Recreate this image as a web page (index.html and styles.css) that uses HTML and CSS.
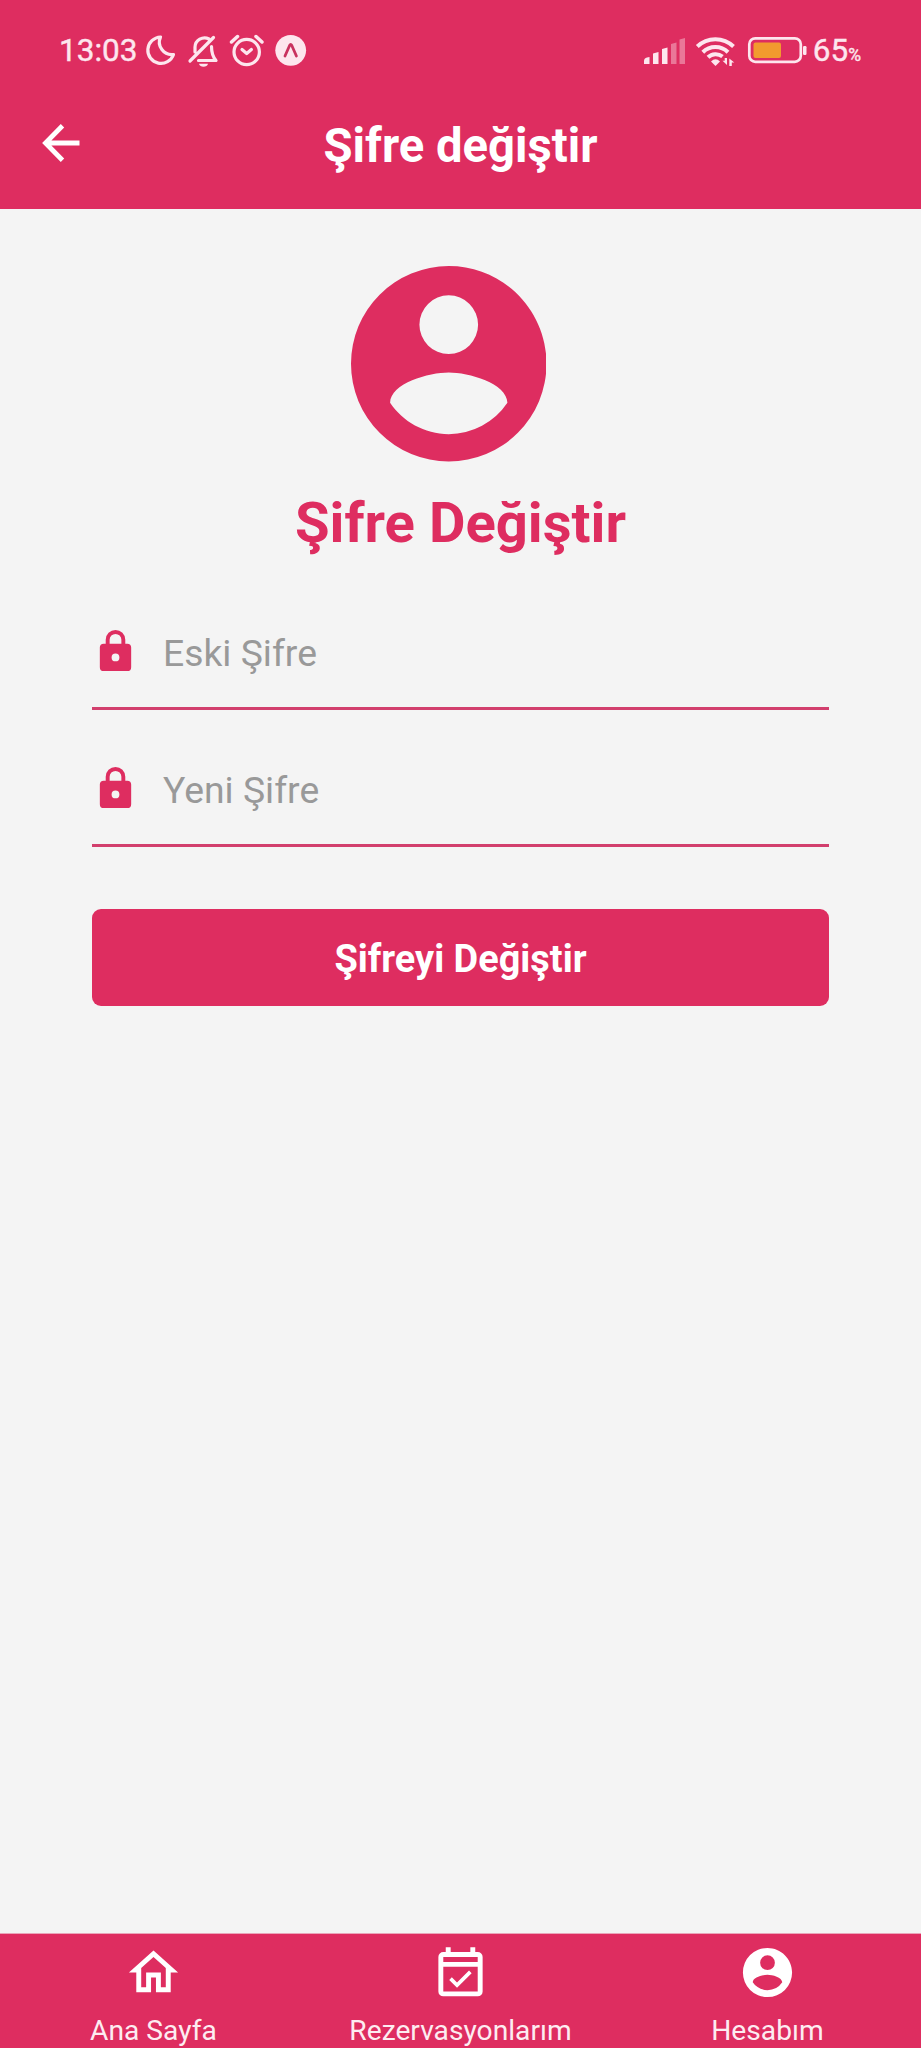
FILE: index.html
```html
<!DOCTYPE html>
<html lang="tr">
<head>
<meta charset="utf-8">
<title>Şifre değiştir</title>
<link rel="stylesheet" href="styles.css">
</head>
<body>
<div class="screen">
  <header class="top">
    <div class="status">
      <span class="clock">13:03</span>
      <svg class="sys" width="170" height="36" viewBox="143 32 170 36" fill="none" stroke="#fde6ee" stroke-width="3.200" stroke-linejoin="round" stroke-linecap="round">
        <path d="M160.500 37A13.200 13.200 0 1 0 173.500 54.500A12.500 12.500 0 0 1 160.500 37Z"/>
        <path d="M190 61L213.500 37.500M195 52V47a9.500 9.500 0 0 1 14-8M211.500 46.500c0 7 1 10 4.500 14H198.500"/>
        <path d="M199 63.700h9c-.5 4-8.500 4-9 0z" fill="#fde6ee" stroke="none"/>
        <circle cx="246.700" cy="52" r="12.700"/>
        <path d="M231.500 42l6-5.500M262 42l-6-5.500" stroke-width="3.500"/>
        <path d="M242 49.500l4.700 4 4.700-4"/>
        <circle cx="290.700" cy="50.300" r="15.400" fill="#fde6ee" stroke="none"/>
        <path d="M285 56l4.600-10.500q1.100-2 2.200 0L296.400 56" stroke="#c9325f" stroke-width="2.800"/>
      </svg>
      <span class="spacer"></span>
      <svg class="signal" width="164" height="36" viewBox="643 32 164 36" fill="#fde6ee">
        <path d="M644 64v-3q0-3 3-3.500l2.500-.5v7zM653 64V53.500l5.500-1.500v12zM662 64V49l5.500-1.500V64z"/>
        <path d="M671 64V44l5.500-1.500V64zM679.500 64V39.500L685 38v26z" opacity=".4"/>
        <g fill="none" stroke="#fde6ee" stroke-width="4">
          <path d="M697.300 46.500a26 26 0 0 1 36.200 0"/>
          <path d="M702.800 52.200a18 18 0 0 1 25.200 0"/>
          <path d="M708 57.300a11 11 0 0 1 14.500-.8"/>
        </g>
        <path d="M711 61.500q4.500-4.500 9 0L715.500 66z"/>
        <path d="M727 58v7l-4.500-4.200h2.200V58zM729.300 66v-7.500l5 4h-2.500V66z"/>
        <rect x="749.300" y="38.300" width="51.500" height="23.500" rx="6" fill="none" stroke="#fde6ee" stroke-width="2.700"/>
        <rect x="753.500" y="42.500" width="27.500" height="15.500" rx="2" fill="#f29a2e"/>
        <rect x="803" y="46" width="3.500" height="9" rx="1.200"/>
      </svg>
      <span class="level">65</span><span class="percent">%</span>
    </div>
    <div class="bar">
      <svg class="back" width="38" height="38" viewBox="0 0 38 38" fill="none" stroke="#fff" stroke-width="4.800"><path d="M37.500 19H4M20.500 1.700L3.500 19L20.500 36.300"/></svg>
      <h1 class="title">Şifre değiştir</h1>
    </div>
  </header>
  <main class="content">
    <svg class="avatar" viewBox="2 2 20 20" fill="#de2d60"><path d="M12 19.200c-2.500 0-4.710-1.280-6-3.200c.03-2 4-3.100 6-3.100s5.970 1.100 6 3.100a7.232 7.232 0 0 1-6 3.200M12 5a3 3 0 0 1 3 3a3 3 0 0 1-3 3a3 3 0 0 1-3-3a3 3 0 0 1 3-3m0-3A10 10 0 0 0 2 12a10 10 0 0 0 10 10a10 10 0 0 0 10-10c0-5.530-4.500-10-10-10"/></svg>
    <h2 class="heading">Şifre Değiştir</h2>
    <div class="field">
      <svg class="lock" viewBox="0 0 24 24" fill="#de2d60"><path d="M12 17a2 2 0 0 0 2-2 2 2 0 0 0-2-2 2 2 0 0 0-2 2 2 2 0 0 0 2 2m6-9a2 2 0 0 1 2 2v10a2 2 0 0 1-2 2H6a2 2 0 0 1-2-2V10a2 2 0 0 1 2-2h1V6a5 5 0 0 1 5-5 5 5 0 0 1 5 5v2h1m-6-5a3 3 0 0 0-3 3v2h6V6a3 3 0 0 0-3-3z"/></svg>
      <span class="hint">Eski Şifre</span>
    </div>
    <div class="field">
      <svg class="lock" viewBox="0 0 24 24" fill="#de2d60"><path d="M12 17a2 2 0 0 0 2-2 2 2 0 0 0-2-2 2 2 0 0 0-2 2 2 2 0 0 0 2 2m6-9a2 2 0 0 1 2 2v10a2 2 0 0 1-2 2H6a2 2 0 0 1-2-2V10a2 2 0 0 1 2-2h1V6a5 5 0 0 1 5-5 5 5 0 0 1 5 5v2h1m-6-5a3 3 0 0 0-3 3v2h6V6a3 3 0 0 0-3-3z"/></svg>
      <span class="hint">Yeni Şifre</span>
    </div>
    <button class="submit" type="button">Şifreyi Değiştir</button>
  </main>
  <nav class="tabs">
    <a class="tab">
      <svg class="tab-icon" viewBox="0 0 24 24" fill="#fff"><path d="M12 5.690l5 4.500V18h-2v-6H9v6H7v-7.810l5-4.500M12 3L2 12h3v8h6v-6h2v6h6v-8h3L12 3z"/></svg>
      <span class="tab-label">Ana Sayfa</span>
    </a>
    <a class="tab">
      <svg class="tab-icon" viewBox="0 -0.700 24 24" fill="#fff"><path fill-rule="evenodd" d="M19 3h-1V1h-2v2H8V1H6v2H5a2 2 0 0 0-2 2v14a2 2 0 0 0 2 2h14a2 2 0 0 0 2-2V5a2 2 0 0 0-2-2zM19 19H5V9h14zM19 7H5V5h14z"/><path d="M16.530 11.560l-1.060-1.060-4.880 4.880-2.120-2.120-1.060 1.060 3.180 3.180z"/></svg>
      <span class="tab-label">Rezervasyonlarım</span>
    </a>
    <a class="tab">
      <svg class="tab-icon" viewBox="0 0 24 24" fill="#fff"><path d="M12 19.200c-2.500 0-4.710-1.280-6-3.200c.03-2 4-3.100 6-3.100s5.970 1.100 6 3.100a7.232 7.232 0 0 1-6 3.200M12 5a3 3 0 0 1 3 3a3 3 0 0 1-3 3a3 3 0 0 1-3-3a3 3 0 0 1 3-3m0-3A10 10 0 0 0 2 12a10 10 0 0 0 10 10a10 10 0 0 0 10-10c0-5.530-4.500-10-10-10"/></svg>
      <span class="tab-label">Hesabım</span>
    </a>
  </nav>
</div>
</body>
</html>
```
FILE: styles.css
```css
* { box-sizing: border-box; }
body { margin: 0; font-family: Roboto, "Liberation Sans", sans-serif; }
.screen {
  width: 921px;
  height: 2048px;
  display: flex;
  flex-direction: column;
  background: #f4f4f4;
  overflow: hidden;
}
.top { height: 209px; background: #de2d60; flex: none; }
.status {
  height: 78px;
  padding: 24px 60px 0 59px;
  display: flex;
  align-items: center;
  color: #fde6ee;
  -webkit-text-stroke: 0.4px #fde6ee;
  white-space: nowrap;
}
.clock { font-size: 31.5px; width: 84px; line-height: 54px; }
.sys { width: 170px; height: 36px; margin-top: -2px; -webkit-text-stroke: 0; }
.spacer { flex: 1; }
.signal { margin: -2px 6px 0 0; }
.level { font-size: 31.5px; line-height: 54px; }
.percent { font-size: 17.5px; padding-top: 8px; }
.bar {
  height: 131px;
  padding: 0 42px;
  display: grid;
  grid-template-columns: 38px 1fr 38px;
  align-items: start;
  color: #fff;
}
.back { margin-top: 46px; }
.title { margin: 39.5px 0 0; font-size: 47.2px; line-height: 56px; font-weight: 700; text-align: center; }
.content {
  flex: 1;
  padding: 57px 92px 0;
  display: flex;
  flex-direction: column;
  align-items: center;
}
.avatar { width: 195.5px; height: 195.5px; margin-right: 24px; flex: none; }
.heading {
  margin: 28.5px 0 0;
  font-size: 56.2px;
  line-height: 66px;
  font-weight: 700;
  color: #de2d60;
}
.field {
  align-self: stretch;
  height: 92px;
  margin-top: 45px;
  padding-bottom: 22px;
  border-bottom: 3px solid #d23f6d;
  display: flex;
  align-items: center;
  gap: 24px;
}
.heading + .field { margin-top: 62px; }
.lock { width: 47px; height: 47px; }
.hint { font-size: 37.3px; line-height: 48px; padding-top: 2px; color: #999; }
.submit {
  align-self: stretch;
  height: 97px;
  margin: 62px 0 0;
  padding: 3px 0 0;
  border: 0;
  border-radius: 9px;
  background: #de2d60;
  color: #fff;
  font: 700 37.9px/48px Roboto, "Liberation Sans", sans-serif;
}
.tabs {
  height: 115px;
  flex: none;
  display: grid;
  grid-template-columns: repeat(3, 1fr);
  background: #de2d60;
  border-top: 1px solid #eaa5b9;
  color: #fff;
}
.tab { display: flex; flex-direction: column; align-items: center; padding-top: 9px; }
.tab-icon { width: 59px; height: 59px; flex: none; }
.tab-label { font-size: 28.2px; line-height: 32px; margin-top: 13px; color: #fdecf1; }
```
